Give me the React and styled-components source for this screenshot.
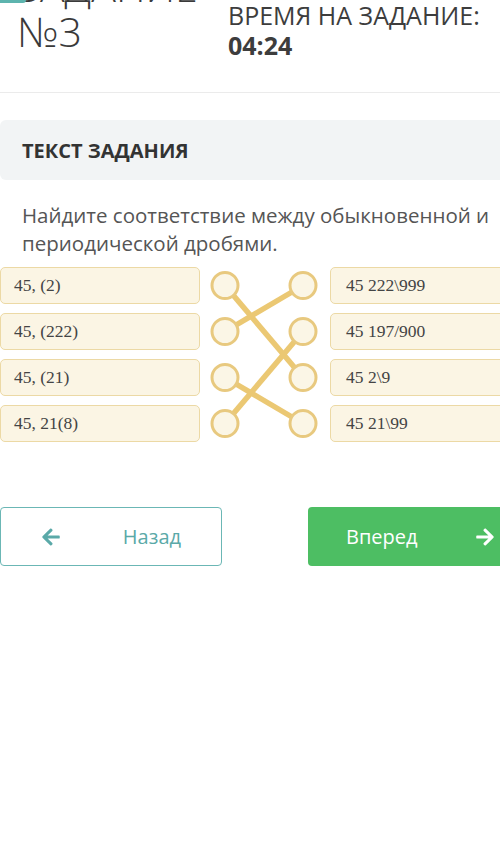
import React from "react";
import styled, { createGlobalStyle } from "styled-components";
import { FaArrowLeft, FaArrowRight } from "react-icons/fa";

const GlobalStyle = createGlobalStyle`
  html, body {
    margin: 0;
    padding: 0;
    background: #ffffff;
    overflow-x: hidden;
  }
  body {
    font-family: "Open Sans", "Noto Sans", sans-serif;
    color: #3b3b3b;
  }
`;

const left = ["45, (2)", "45, (222)", "45, (21)", "45, 21(8)"];
const right = ["45 222\\999", "45 197/900", "45 2\\9", "45 21\\99"];
// left index -> right index
const links = [
  [0, 2],
  [1, 0],
  [2, 3],
  [3, 1],
];

const ROW_H = 37;
const ROW_GAP = 9;

export default function App() {
  const cy = (i) => i * (ROW_H + ROW_GAP) + ROW_H / 2;
  const totalH = left.length * ROW_H + (left.length - 1) * ROW_GAP;

  return (
    <>
      <GlobalStyle />
      <Page>
        <Header>
          <Badge />
          <Title>
            ЗАДАНИЕ
            <br />
            №3
          </Title>
          <Timer>
            ВРЕМЯ НА ЗАДАНИЕ:
            <strong>04:24</strong>
          </Timer>
        </Header>

        <TaskPanel>ТЕКСТ ЗАДАНИЯ</TaskPanel>

        <Question>
          Найдите соответствие между обыкновенной и периодической дробями.
        </Question>

        <Matcher>
          <Column>
            {left.map((t) => (
              <Option key={t}>{t}</Option>
            ))}
          </Column>

          <Links viewBox={`0 0 130 ${totalH}`} width="130" height={totalH}>
            {links.map(([a, b]) => (
              <line
                key={a}
                x1="25"
                y1={cy(a)}
                x2="103"
                y2={cy(b)}
                stroke="#ebc873"
                strokeWidth="5.5"
              />
            ))}
            {left.map((_, i) => (
              <g key={i}>
                <circle cx="25" cy={cy(i)} r="13" fill="#fbf6e6" stroke="#e8c97f" strokeWidth="3" />
                <circle cx="103" cy={cy(i)} r="13" fill="#fbf6e6" stroke="#e8c97f" strokeWidth="3" />
              </g>
            ))}
          </Links>

          <Column>
            {right.map((t) => (
              <Option key={t} $side="right">
                {t}
              </Option>
            ))}
          </Column>
        </Matcher>

        <Nav>
          <NavButton>
            <FaArrowLeft size={20} />
            <span>Назад</span>
          </NavButton>
          <NavButton $primary>
            <span>Вперед</span>
            <FaArrowRight size={20} />
          </NavButton>
        </Nav>
      </Page>
    </>
  );
}

const Page = styled.div`
  width: 500px;
  overflow: hidden;
  min-height: 864px;
`;

const Header = styled.header`
  position: relative;
  display: flex;
  align-items: flex-start;
  height: 93px;
  border-bottom: 1.5px solid #ebebeb;
  box-sizing: border-box;
`;

const Badge = styled.div`
  position: absolute;
  left: 0;
  top: 0;
  width: 26px;
  height: 3px;
  background: #5db4ae;
  border-radius: 0 0 3px 0;
`;

const Title = styled.h1`
  margin: -36px 0 0;
  padding-left: 17px;
  width: 211px;
  font-size: 41px;
  line-height: 45px;
  font-weight: 300;
  color: #3a3a3a;
`;

const Timer = styled.div`
  padding-top: 0;
  font-size: 25px;
  line-height: 30px;
  font-weight: 400;
  color: #3d3d3d;
  display: flex;
  flex-direction: column;

  strong {
    font-weight: 700;
  }
`;

const TaskPanel = styled.div`
  margin-top: 27px;
  height: 60px;
  display: flex;
  align-items: center;
  padding-left: 22px;
  background: #f2f4f5;
  border-radius: 6px 0 0 6px;
  font-size: 20px;
  font-weight: 700;
  color: #333;
`;

const Question = styled.p`
  margin: 21px 0 0;
  padding: 0 6px 0 22px;
  font-size: 20.5px;
  line-height: 28px;
  color: #555;
`;

const Matcher = styled.div`
  margin-top: 10px;
  display: grid;
  grid-template-columns: 200px 130px 176px;
`;

const Column = styled.div`
  display: flex;
  flex-direction: column;
  gap: ${ROW_GAP}px;
`;

const Option = styled.div`
  height: ${ROW_H}px;
  box-sizing: border-box;
  display: flex;
  align-items: center;
  padding-left: ${(p) => (p.$side === "right" ? 15 : 13)}px;
  background: #fbf5e4;
  border: 1.5px solid #ecd9a5;
  border-radius: 5px;
  font-family: "Liberation Serif", "DejaVu Serif", serif;
  font-size: 17.5px;
  color: #444;
`;

const Links = styled.svg`
  display: block;
`;

const Nav = styled.div`
  margin-top: 65px;
  display: flex;
  justify-content: space-between;
  margin-right: -6px;
`;

const NavButton = styled.button`
  height: 59px;
  width: ${(p) => (p.$primary ? "198px" : "222px")};
  box-sizing: border-box;
  display: flex;
  align-items: center;
  justify-content: space-between;
  padding: ${(p) => (p.$primary ? "0 11px 0 38px" : "0 40px 0 40px")};
  border-radius: 4px;
  font-family: "Open Sans", sans-serif;
  font-size: 20px;
  cursor: pointer;
  background: ${(p) => (p.$primary ? "#4dbe63" : "#ffffff")};
  color: ${(p) => (p.$primary ? "#ffffff" : "#5aa9a8")};
  border: ${(p) => (p.$primary ? "none" : "1.5px solid #6bb7b5")};
`;
